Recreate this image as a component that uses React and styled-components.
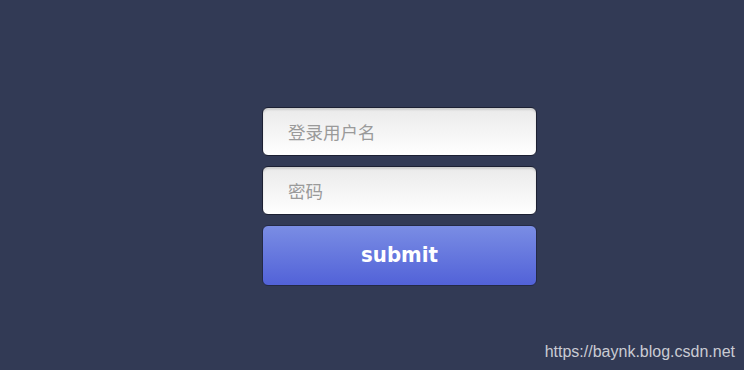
import React from "react";
import styled, { createGlobalStyle } from "styled-components";

const Global = createGlobalStyle`
  html, body { margin: 0; padding: 0; background: #323a55; }
  body { font-family: "Noto Sans CJK SC", "Liberation Sans", sans-serif; }
  * { box-sizing: border-box; }
`;

const Page = styled.div`
  position: relative;
  width: 744px;
  height: 370px;
  background: #323a55;
  overflow: hidden;
`;

const Form = styled.form`
  display: flex;
  flex-direction: column;
  gap: 10px;
  width: 275px;
  margin: 0 0 0 262px;
  padding: 107px 0 0 0;
`;

const Field = styled.input`
  height: 49px;
  width: 100%;
  border: 1px solid #1c2033;
  border-radius: 6px;
  background: linear-gradient(#eaeaea, #ffffff);
  box-shadow: inset 0 2px 2px rgba(0, 0, 0, 0.12);
  padding: 0 0 0 25px;
  font-family: "Noto Sans CJK SC", sans-serif;
  font-size: 17.5px;
  color: #555;
  outline: none;
  &::placeholder { color: #9a9a9a; }
`;

const Submit = styled.button`
  height: 61px;
  width: 100%;
  border: 1px solid #242a45;
  border-radius: 6px;
  background: linear-gradient(#7a8de4, #5262d8);
  color: #ffffff;
  font-family: "DejaVu Sans Condensed", "DejaVu Sans", Verdana, sans-serif;
  font-weight: bold;
  font-size: 22px;
  cursor: pointer;
  padding: 0 0 2px 0;
`;

const Watermark = styled.span`
  position: absolute;
  right: 9px;
  bottom: 9px;
  font-family: "Liberation Sans", Arial, sans-serif;
  font-size: 16px;
  color: #c9cbd3;
`;

export default function App() {
  return (
    <Page>
      <Global />
      <Form onSubmit={(e) => e.preventDefault()}>
        <Field type="text" placeholder="登录用户名" />
        <Field type="password" placeholder="密码" />
        <Submit type="submit">submit</Submit>
      </Form>
      <Watermark>https://baynk.blog.csdn.net</Watermark>
    </Page>
  );
}
